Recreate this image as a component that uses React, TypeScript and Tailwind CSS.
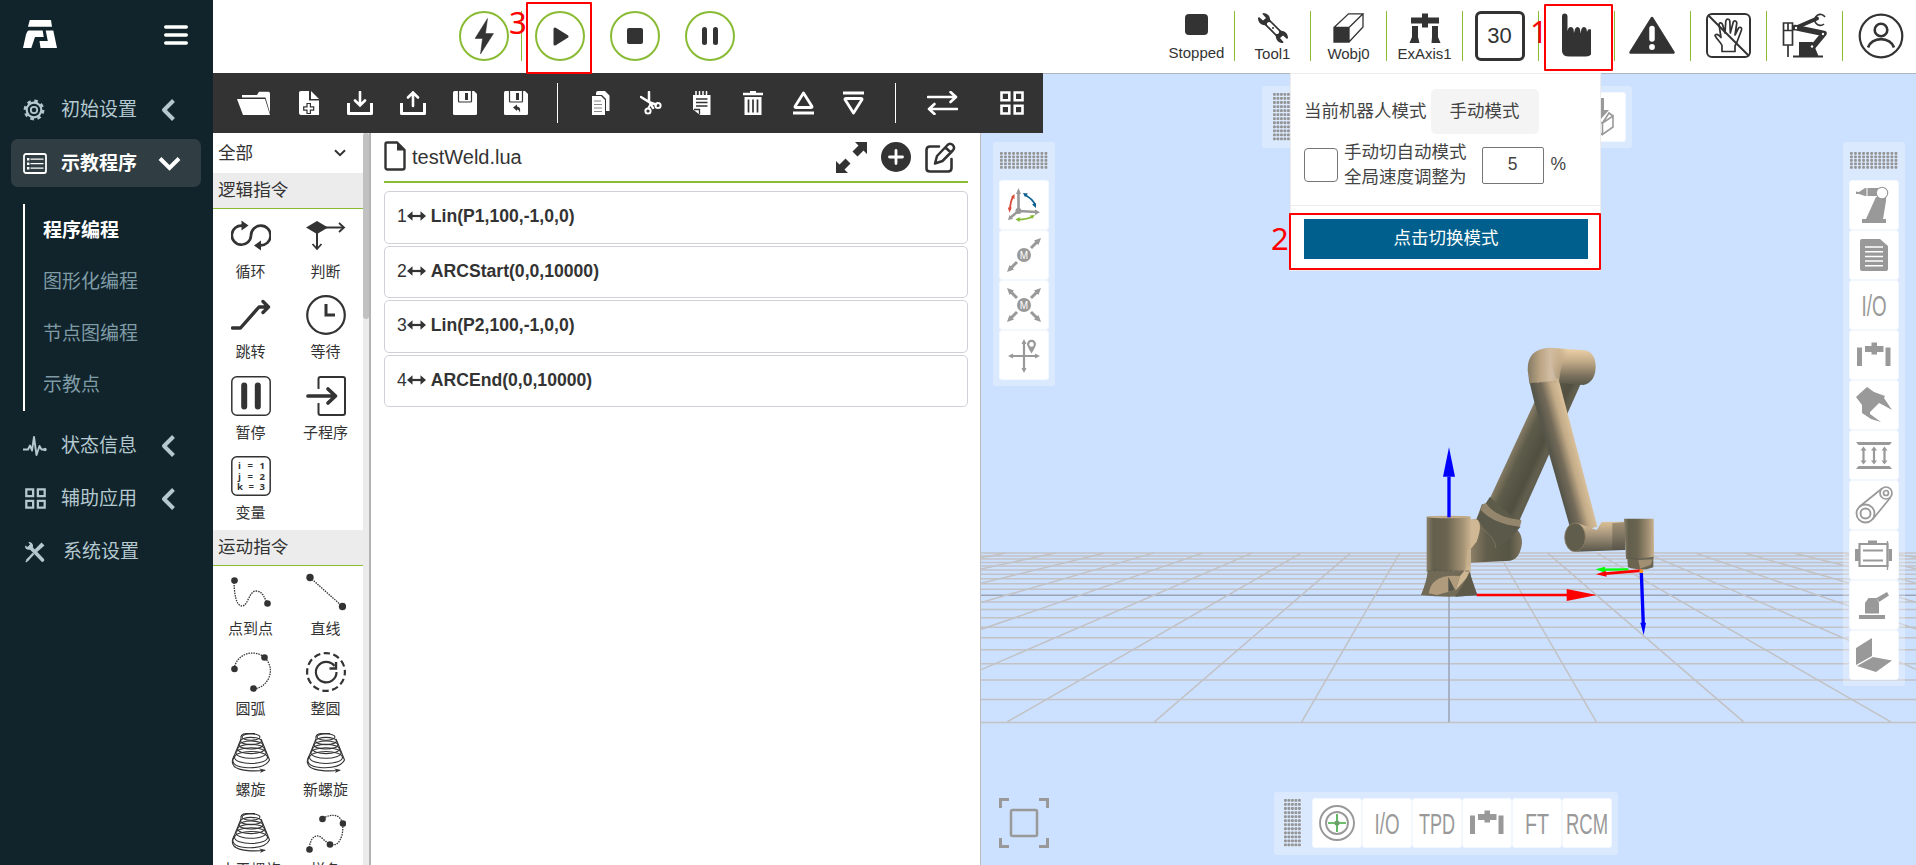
import React from "react";

const GRAY = "#999999";
const DARK = "#333333";

type SvgProps = { w: number; h: number; vb?: string; className?: string; children: React.ReactNode };
const Svg = ({ w, h, vb, className = "", children }: SvgProps) => (
  <svg width={w} height={h} viewBox={vb ?? `0 0 ${w} ${h}`} fill="none" className={"block shrink-0 " + className}>
    {children}
  </svg>
);

/* ---------- sidebar ---------- */

const ChevronLeft = () => (
  <Svg w={14} h={22}>
    <path d="M12.500 1.500 3 11l9.500 9.500" stroke="#b4c8cf" strokeWidth="4" strokeLinejoin="round" />
  </Svg>
);

const GearIcon = () => (
  <Svg w={22} h={22} className="-ml-[2px]">
    <circle cx="11" cy="11" r="9.2" stroke="#b4c8cf" strokeWidth="2.4" strokeDasharray="3.6 3.625" />
    <circle cx="11" cy="11" r="7.3" stroke="#b4c8cf" strokeWidth="2.2" />
    <circle cx="11" cy="11" r="3.2" stroke="#b4c8cf" strokeWidth="1.8" />
  </Svg>
);

const ListIcon = () => (
  <Svg w={24} h={21}>
    <rect x="1" y="1" width="22" height="19" rx="2" stroke="#fff" strokeWidth="1.8" />
    <path d="M7.5 6.2h13M7.5 10.7h13M7.5 15.2h13" stroke="#fff" strokeWidth="1.2" />
    <path d="M4 6.2h2.4M4 10.7h2.4M4 15.2h2.4" stroke="#fff" strokeWidth="2.6" />
  </Svg>
);

const PulseIcon = () => (
  <Svg w={24} h={22}>
    <path d="M0 14.5h5l2-4 2 5L11 2l2.5 18 3-9 2 3.5h3" stroke="#b4c8cf" strokeWidth="1.9" strokeLinejoin="round" />
    <circle cx="22" cy="14.5" r="1.7" fill="#b4c8cf" />
  </Svg>
);

const FourSquares = ({ color, size }: { color: string; size: number }) => (
  <Svg w={size} h={size} vb="0 0 24 24">
    <path d="M1.5 1.5h7.8v7.8H1.5zM14.7 1.5h7.8v7.8h-7.8zM1.5 14.7h7.8v7.8H1.5zM14.7 14.7h7.8v7.8h-7.8z" stroke={color} strokeWidth="2.6" />
  </Svg>
);

const ToolsIcon = () => (
  <Svg w={22} h={22}>
    <path d="M6 6 18.500 19" stroke="#b4c8cf" strokeWidth="3.6" strokeLinecap="round" />
    <path d="M1 4.500C.8 8 3.500 9.500 6.500 8.600L9 6C9.400 3 7.500.8 4.300 1L6 3.600 3.800 6z" fill="#b4c8cf" />
    <path d="M17.500 1.500 20.500 4.500 12 12 9.500 9.800z" fill="#b4c8cf" />
    <path d="M9.500 12.500 3 19.500" stroke="#b4c8cf" strokeWidth="2.4" />
    <path d="M2 21l2.500-3.500" stroke="#b4c8cf" strokeWidth="1.500" />
  </Svg>
);

const NavItem = ({ icon, label, chevron = true }: { icon: React.ReactNode; label: string; chevron?: boolean }) => (
  <div className="flex h-[53px] items-center pl-[23px]">
    <div className="flex w-[24px] justify-center">{icon}</div>
    <span className={"w-[100px] text-[19px] leading-none text-[#b4c8cf] " + (chevron ? "ml-[14px]" : "ml-[16px]")}>{label}</span>
    {chevron && <ChevronLeft />}
  </div>
);

const Sidebar = () => (
  <aside className="flex w-[213px] shrink-0 flex-col bg-[#11242b]">
    <div className="flex h-[83px] shrink-0 items-start justify-between pt-[20px] pl-[23px] pr-[25px]">
      <Svg w={34} h={28}>
        <path d="M6.800 0H28L29 6.800H5z" fill="#fff" />
        <path d="M5.500 10.500H19.700L20.700 17H12L8.300 28H0L3 14.500Q4 11 5.500 10.500z" fill="#fff" />
        <path d="M22.700 10.500H30.300L34 28H17.500L16.500 21H24.800z" fill="#fff" />
      </Svg>
      <Svg w={24} h={20} className="mt-[5px]">
        <path d="M1.700 2h20.600M1.700 10h20.600M1.700 18h20.600" stroke="#fff" strokeWidth="3.400" strokeLinecap="round" />
      </Svg>
    </div>
    <NavItem icon={<GearIcon />} label="初始设置" />
    <div className="ml-[11px] mt-[3px] flex h-[48px] w-[190px] shrink-0 items-center rounded-[7px] bg-[#303e43] pl-[12px]">
      <ListIcon />
      <span className="ml-[14px] w-[97px] text-[19px] leading-none font-bold text-white">示教程序</span>
      <Svg w={23} h={15}>
        <path d="M2 2.500 11.500 12 21 2.500" stroke="#fff" strokeWidth="4" />
      </Svg>
    </div>
    <div className="ml-[23px] mt-[17px] mb-[8px] flex h-[207px] shrink-0 flex-col border-l-2 border-white pl-[18px] text-[19px] leading-none text-[#7f9ba6]">
      <div className="flex h-[51.500px] items-center pt-[1px] font-bold text-white">程序编程</div>
      <div className="flex h-[51.500px] items-center pt-[1px]">图形化编程</div>
      <div className="flex h-[51.500px] items-center pt-[1px]">节点图编程</div>
      <div className="flex h-[51.500px] items-center pt-[1px]">示教点</div>
    </div>
    <NavItem icon={<PulseIcon />} label="状态信息" />
    <NavItem icon={<FourSquares color="#b4c8cf" size={21} />} label="辅助应用" />
    <NavItem icon={<ToolsIcon />} label="系统设置" chevron={false} />
  </aside>
);

/* ---------- header ---------- */

const RoundButton = ({ children, className = "" }: { children: React.ReactNode; className?: string }) => (
  <button className={"flex size-[50px] items-center justify-center rounded-full border-2 border-[#8abb35] " + className}>
    {children}
  </button>
);

const StatusCell = ({ children, label, last = false }: { children: React.ReactNode; label?: string; last?: boolean }) => (
  <div className={"flex h-[50px] w-[76px] shrink-0 flex-col items-center " + (last ? "" : "border-r border-[#8abb35] ") + (label ? "pt-[2px]" : "justify-center")}>
    {children}
    {label && <span className="mt-[2px] text-[15px] leading-[17px] text-[#333]">{label}</span>}
  </div>
);

const GantryIcon = () => (
  <Svg w={32} h={30}>
    <path d="M2 4.500h11V.5h6v4h11v6H19v4h-6v-4H2z" fill={DARK} />
    <path d="M3 13h6v11l1.500 6H.5L3 24zM23 13h6v11l2.500 6h-9L23 24z" fill={DARK} />
  </Svg>
);

const Header = () => (
  <header className="flex h-[73px] shrink-0 items-start bg-white pt-[11px]">
    <div className="flex pl-[246px]">
      <RoundButton>
        <Svg w={20} h={36}>
          <path d="M13.500.5 1 20.500h7.500L6.500 36 19.500 15.500h-8z" fill={DARK} stroke={DARK} strokeWidth=".5" strokeLinejoin="round" />
        </Svg>
      </RoundButton>
      <div className="ml-[12px] h-[50px] w-px bg-[#8abb35]" />
      <RoundButton className="ml-[13px]">
        <Svg w={16} h={19} className="ml-[2px]">
          <path d="M2 2v15l12-7.500z" fill={DARK} stroke={DARK} strokeWidth="3" strokeLinejoin="round" />
        </Svg>
      </RoundButton>
      <RoundButton className="ml-[25px]">
        <div className="size-[16px] rounded-[2px] bg-[#333]" />
      </RoundButton>
      <RoundButton className="ml-[25px] gap-[6px]">
        <div className="h-[18px] w-[5px] rounded-full bg-[#333]" />
        <div className="h-[18px] w-[5px] rounded-full bg-[#333]" />
      </RoundButton>
    </div>
    <div className="-mr-[3px] ml-auto flex">
      <StatusCell label="Stopped">
        <div className="mt-[1px] mb-[7px] size-[23px] rounded-[4px] bg-[#333]" />
      </StatusCell>
      <StatusCell label="Tool1">
        <Svg w={30} h={30}>
          <path d="M7 7 23 23" stroke={DARK} strokeWidth="7.500" />
          <path d="M5 0C10 0 13 4 12 9L9 12C4 13 0 10 0 5L1 4 5 7.500 8 5 4.500 1zM25 30C20 30 17 26 18 21L21 18C26 17 30 20 30 25L29 26 25 22.500 22 25 25.500 29z" fill={DARK} />
          <path d="M11 11l8 8" stroke="#fff" strokeWidth="4" strokeLinecap="round" />
          <circle cx="15" cy="15" r="1" fill={DARK} />
        </Svg>
      </StatusCell>
      <StatusCell label="Wobj0">
        <Svg w={31} h={30}>
          <path d="M1 14.500h15V29H1z" fill={DARK} />
          <path d="M1 14.500h15V29H1zM1 14.500 15.500.8H30L16 14.500M30 .8V14L16 29" stroke={DARK} strokeWidth="1.300" />
        </Svg>
      </StatusCell>
      <StatusCell label="ExAxis1">
        <GantryIcon />
      </StatusCell>
      <StatusCell>
        <div className="mr-[2px] flex size-[50px] items-center justify-center rounded-[6px] border-[3px] border-[#333] pb-[2px] text-[22px] text-[#333]">30</div>
      </StatusCell>
      <StatusCell>
        <Svg w={30} h={44} className="mr-[2px] -mt-[2px]">
          <path d="M1 3.500Q1 .5 3.700.5T6.500 3.500V18l1-3q1-1 2.500-1t2.500 2l.5 4 1-4q1-2 2.500-2t2.500 2l.5 4 1-4q.8-2 2.500-2t2.500 2l.5 3 1-2.500q4-1 4 2V38q0 5.500-6 5.500H8.500Q1 43.500 1 38z" fill={DARK} />
        </Svg>
      </StatusCell>
      <StatusCell>
        <Svg w={46} h={38} className="mr-[1px] -mt-[2px]">
          <path d="M23 2 44.500 36.500H1.500z" fill={DARK} stroke={DARK} strokeWidth="2.500" strokeLinejoin="round" />
          <path d="M23 12.500V23" stroke="#fff" strokeWidth="5.500" strokeLinecap="round" />
          <circle cx="23" cy="31" r="2.900" fill="#fff" />
        </Svg>
      </StatusCell>
      <StatusCell>
        <Svg w={45} h={45} className="-mt-[1px]">
          <rect x="1" y="1" width="43" height="43" rx="5" stroke={DARK} strokeWidth="2" />
          <path d="M16 38.500v-6c-1-3-6-7-7-10 1-2 4-1 6 2l-2-13c.5-2.500 3-2 3.700.5L19 20l.8-12c.8-2.500 3.500-2.500 4 0l.5 12 3-11c1-2 3.500-1 3.500 1L29 22l3.500-7c1.500-1.500 3.700-.5 3 2L31 29l-2 4v5.500z" stroke={DARK} strokeWidth="1.700" strokeLinejoin="round" />
          <path d="M2 2 43 43" stroke={DARK} strokeWidth="2" />
        </Svg>
      </StatusCell>
      <StatusCell>
        <Svg w={46} h={46} className="-mt-[1px]">
          <path d="M1.500 10h9v22h-9zM1.500 17.500h9M6 10v7M6 32v12" stroke={DARK} strokeWidth="1.700" />
          <path d="M12 15.500 35 5.500" stroke={DARK} strokeWidth="4" strokeLinecap="round" />
          <path d="M13 14.500 42 20.500 30 35" stroke={DARK} strokeWidth="5.500" strokeLinejoin="round" strokeLinecap="round" />
          <path d="M18 30h12l5 12H18zM11 43.500h30" fill={DARK} stroke={DARK} strokeWidth="2" />
          <path d="M43 4a5.500 5.500 0 1 0-1 7" stroke={DARK} strokeWidth="1.600" />
          <circle cx="14" cy="15" r="1.200" fill="#fff" />
          <circle cx="41" cy="21" r="1.200" fill="#fff" />
          <circle cx="30" cy="33.500" r="1.200" fill="#fff" />
        </Svg>
      </StatusCell>
      <StatusCell last>
        <Svg w={46} h={46} className="-mt-[1px] mr-[1px]">
          <circle cx="23" cy="23" r="21.300" stroke={DARK} strokeWidth="2.200" />
          <circle cx="23" cy="17" r="6.300" stroke={DARK} strokeWidth="2.600" />
          <path d="M10 34.500a13.500 11.500 0 0 1 26 0" stroke={DARK} strokeWidth="2.600" />
        </Svg>
      </StatusCell>
    </div>
  </header>
);

/* ---------- program toolbar ---------- */

const Divider = ({ className }: { className: string }) => <div className={"h-[40px] w-px shrink-0 bg-white " + className} />;

const Toolbar = () => (
  <div className="relative z-10 flex h-[60px] w-[830px] shrink-0 items-center bg-[#333] pl-[24px] pb-[1px]">
    <Svg w={34} h={24}>
      <path d="M5 6.500V4h15l2-3.200h9.500Q33 .8 33 3v19L28.500 6.500z" fill="#fff" />
      <path d="M0 8h28l5 16H6z" fill="#fff" />
    </Svg>
    <Svg w={20} h={24} className="ml-[28px]">
      <path d="M0 1.500Q0 0 2 0H10V9.500H20V24H2Q0 24 0 22z" fill="#fff" />
      <path d="M12 0 20 8H12z" fill="#fff" />
      <path d="M8 12.500h3.400v3.300h3.300v3.400h-3.300v3.300H8v-3.300H4.700v-3.400H8z" stroke="#333" strokeWidth="1.200" />
    </Svg>
    <Svg w={26} h={24} className="ml-[28px]">
      <path d="M1.500 12v10.500h23V12" stroke="#fff" strokeWidth="3" strokeLinejoin="round" />
      <path d="M13 1v12M8 9.500l5 5 5-5" stroke="#fff" strokeWidth="2.600" strokeLinecap="round" />
    </Svg>
    <Svg w={26} h={24} className="ml-[27px]">
      <path d="M1.500 12v10.500h23V12" stroke="#fff" strokeWidth="3" strokeLinejoin="round" />
      <path d="M13 15V2M8 6.500l5-5 5 5" stroke="#fff" strokeWidth="2.600" strokeLinecap="round" />
    </Svg>
    {[0, 1].map((k) => (
      <Svg key={k} w={24} h={24} className="ml-[27px]">
        <path d="M0 1.500Q0 0 1.500 0H21l3 3v19.500q0 1.500-1.500 1.500H1.500Q0 24 0 22.500z" fill="#fff" />
        <path d="M5.500 0v10Q5.500 11 6.500 11H17.500Q18.500 11 18.500 10V0" stroke="#333" strokeWidth="1.200" />
        <path d="M13.500 2v7" stroke="#333" strokeWidth="3" />
        {k === 1 && <path d="M9 16.500l4-3v2q4 0 3 6-1-3-3-3v1.500z" fill="#333" />}
      </Svg>
    ))}
    <Divider className="ml-[29px]" />
    <Svg w={18} h={24} className="ml-[34px]">
      <path d="M4 2Q4 0 6 0h7l4.500 4.500V20H14V8L10 4H4z" fill="#fff" />
      <path d="M0 5h9l4 4v15H0z" fill="#fff" />
      <path d="M2 10h7M2 13.500h8M2 17h8M2 20.500h8" stroke="#888" strokeWidth="1.200" />
    </Svg>
    <Svg w={22} h={24} className="ml-[30px]">
      <path d="M9 1v9l4 7M1 6l9 5.500 6 2" stroke="#fff" strokeWidth="2.500" strokeLinecap="round" />
      <path d="m11 12-3 6" stroke="#fff" strokeWidth="2" />
      <circle cx="8" cy="20" r="2.600" stroke="#fff" strokeWidth="2" />
      <circle cx="18" cy="14.500" r="2.600" stroke="#fff" strokeWidth="2" />
    </Svg>
    <Svg w={18} h={24} className="ml-[31px]">
      <path d="M0 4h17.500v20H7L0 18.500z" fill="#fff" />
      <path d="M3 0v4M6.500 0v4M10 0v4M13.500 0v4" stroke="#fff" strokeWidth="1.500" />
      <path d="M3 8h11.500M3 11.500h11.500M3 15h11.500" stroke="#333" strokeWidth="1.500" />
      <path d="M1 18.500h5.500v5" stroke="#333" strokeWidth="1.300" />
    </Svg>
    <Svg w={20} h={24} className="ml-[32px]">
      <path d="M0 3h20M7 1.300h6" stroke="#fff" strokeWidth="2.600" />
      <path d="M1.500 6h17v18h-17z" fill="#fff" />
      <path d="M5.500 8.500v13M10 8.500v13M14.500 8.500v13" stroke="#333" strokeWidth="1.700" />
    </Svg>
    <Svg w={21} h={24} className="ml-[30px]">
      <path d="M10.500 2 2 15.500q-.3 1 1 1h15q1.300 0 1-1z" stroke="#fff" strokeWidth="2.800" strokeLinejoin="round" />
      <path d="M0 22h21" stroke="#fff" strokeWidth="3" />
    </Svg>
    <Svg w={21} h={24} className="ml-[29px]">
      <path d="M10.500 22 2 8.500q-.3-1 1-1h15q1.300 0 1 1z" stroke="#fff" strokeWidth="2.800" strokeLinejoin="round" />
      <path d="M0 2h21" stroke="#fff" strokeWidth="3" />
    </Svg>
    <Divider className="ml-[31px]" />
    <Svg w={31} h={24} className="ml-[31px]">
      <path d="M1 6h28M23.500 1l5.500 5-5.500 5M30 18H2M7.500 13 2 18l5.500 5" stroke="#fff" strokeWidth="2.600" strokeLinecap="round" strokeLinejoin="round" />
    </Svg>
    <div className="ml-[42px]">
      <FourSquares color="#fff" size={24} />
    </div>
  </div>
);

/* ---------- instruction list ---------- */

const dotted = { stroke: DARK, strokeWidth: 1.3, strokeDasharray: "1.5 1" };

const SpiralIcon = () => (
  <Svg w={40} h={40}>
    <g stroke={DARK} strokeWidth="1.100">
      <path d="M24 .6H15Q9 1 10 6M10 6 1.500 27" />
      <ellipse cx="20" cy="4" rx="9" ry="3.200" />
      <ellipse cx="20" cy="8" rx="10.500" ry="3.600" />
      <ellipse cx="20" cy="12" rx="12" ry="4" />
      <ellipse cx="20" cy="16" rx="13.500" ry="4.600" />
      <ellipse cx="20" cy="20" rx="15" ry="5.300" />
      <ellipse cx="20" cy="24.500" rx="16.500" ry="6" />
      <path d="M3 23Q-2 33 14 34.500 34 36 38.500 27 35 18 30 6" />
      <path d="M1.500 27Q-1 40 34 37.500" />
    </g>
    <path d="m28 35.500 7 1.500-6 3 1.500-2.500z" fill={DARK} />
  </Svg>
);

const logicItems: [string, React.ReactNode][] = [
  ["循环", <Svg key="a" w={40} h={40}>
    <path d="M15 10.600H11.500A9.600 9.600 0 1 0 20 20.500 9.800 9.800 0 1 1 29.500 30.300H26" stroke={DARK} strokeWidth="2.700" />
    <path d="M10.500 5.500 17.500 10.500l-7 5zM30 25.500v10l-7-5z" fill={DARK} />
  </Svg>],
  ["判断", <Svg key="b" w={40} h={40}>
    <path d="M0 12.500 11 6l11 6.500L11 19z" fill={DARK} />
    <path d="M18 12.500h19M11 18v15" stroke={DARK} strokeWidth="2" />
    <path d="m33 8 5 4.500-5 4.500M6.500 29l4.500 5 4.500-5" stroke={DARK} strokeWidth="1.800" />
  </Svg>],
  ["跳转", <Svg key="c" w={40} h={40}>
    <path d="M1.500 33h8L28 12h9M32 6.500l5.500 5.500-5.500 5.500" stroke={DARK} strokeWidth="3.400" strokeLinecap="round" strokeLinejoin="round" />
  </Svg>],
  ["等待", <Svg key="d" w={40} h={40}>
    <circle cx="20" cy="20" r="18.800" stroke={DARK} strokeWidth="2.200" />
    <path d="M20 9v11h9" stroke={DARK} strokeWidth="3" />
  </Svg>],
  ["暂停", <Svg key="e" w={40} h={40}>
    <rect x=".8" y=".8" width="38.400" height="38.400" rx="5" stroke={DARK} strokeWidth="1.500" />
    <path d="M13.200 9.500v21M26.800 9.500v21" stroke={DARK} strokeWidth="6" strokeLinecap="round" />
  </Svg>],
  ["子程序", <Svg key="f" w={40} h={40}>
    <path d="M12.500 13V3q0-2 2-2H37q2 0 2 2v34q0 2-2 2H14.500q-2 0-2-2V27" stroke={DARK} strokeWidth="2" />
    <path d="M2 20h27M22 13l7.500 7-7.500 7" stroke={DARK} strokeWidth="3.700" strokeLinecap="round" strokeLinejoin="round" />
  </Svg>],
  ["变量", <Svg key="g" w={40} h={40}>
    <rect x=".8" y=".8" width="38.400" height="38.400" rx="5" stroke={DARK} strokeWidth="1.500" />
    <g fill={DARK} fontFamily="Open Sans, sans-serif" fontWeight="700" fontSize="9.500">
      <text x="7" y="12.800" textLength="27">i = 1</text>
      <text x="7" y="23.500" textLength="27">j = 2</text>
      <text x="6" y="34.200" textLength="28">k = 3</text>
    </g>
  </Svg>],
];

const motionItems: [string, React.ReactNode][] = [
  ["点到点", <Svg key="a" w={40} h={40}>
    <path d="M3 8C3 21 5 34 11 34S18 19 25 19 33 26 37 32" {...dotted} />
    <circle cx="3.500" cy="8.500" r="3.300" fill={DARK} /><circle cx="36.500" cy="31.500" r="3.300" fill={DARK} />
  </Svg>],
  ["直线", <Svg key="b" w={40} h={40}>
    <path d="M4 5.500 36.500 34.500" {...dotted} />
    <circle cx="4" cy="5.500" r="3.700" fill={DARK} /><circle cx="36.500" cy="34.500" r="3.700" fill={DARK} />
  </Svg>],
  ["圆弧", <Svg key="c" w={40} h={40}>
    <path d="M3 17C6 0 25-3 34 6 45 17 38 35 23 37" {...dotted} />
    <circle cx="3.500" cy="17" r="3.300" fill={DARK} /><circle cx="33.500" cy="5.500" r="3.300" fill={DARK} /><circle cx="22.500" cy="36.500" r="3.300" fill={DARK} />
  </Svg>],
  ["整圆", <Svg key="d" w={40} h={40}>
    <circle cx="20" cy="20" r="18.900" stroke={DARK} strokeWidth="2.200" strokeDasharray="6.500 3.396" strokeDashoffset="3" />
    <path d="M28.500 14a10.300 10.300 0 1 0 2 6" stroke={DARK} strokeWidth="2.200" />
    <path d="M30 10v6.500h-6.500" stroke={DARK} strokeWidth="2.400" />
  </Svg>],
  ["螺旋", <SpiralIcon key="e" />],
  ["新螺旋", <SpiralIcon key="f" />],
  ["水平螺旋", <SpiralIcon key="g" />],
  ["样条", <Svg key="h" w={40} h={40}>
    <path d="M3 37C4 24 10 20 16 25 24 33 32 36 36 22 39 8 34-3 17 5" {...dotted} />
    <circle cx="3.500" cy="36.500" r="3.300" fill={DARK} /><circle cx="24" cy="31.500" r="3.300" fill={DARK} /><circle cx="37" cy="10.500" r="3.300" fill={DARK} /><circle cx="16.500" cy="6" r="3.300" fill={DARK} />
  </Svg>],
];

const Group = ({ title, items }: { title: string; items: [string, React.ReactNode][] }) => (
  <section>
    <h3 className="flex h-[36px] items-center border-b border-[#8abb35] bg-[#ececec] pl-[5px] text-[17.600px] leading-none">{title}</h3>
    <div className="grid grid-cols-2">
      {items.map(([label, icon]) => (
        <div key={label} className="flex h-[80.300px] flex-col items-center pt-[6px]">
          {icon}
          <span className="mt-[7px] text-[15px] leading-[20px] whitespace-nowrap">{label}</span>
        </div>
      ))}
    </div>
  </section>
);

const InstructionPanel = () => (
  <div className="flex w-[158px] shrink-0 border-r-2 border-[#b3b3b3] text-[#333]">
    <div className="w-[150px] overflow-hidden">
      <div className="flex h-[40px] items-center justify-between pl-[5px] pr-[17px] text-[17.600px]">
        <span>全部</span>
        <Svg w={12} h={8}><path d="m1 1.200 5 5 5-5" stroke={DARK} strokeWidth="2" /></Svg>
      </div>
      <Group title="逻辑指令" items={logicItems} />
      <Group title="运动指令" items={motionItems} />
    </div>
    <div className="w-[6px] bg-[#ebebeb]">
      <div className="h-[186px] w-full rounded-[3px] bg-[#c1c1c1]" />
    </div>
  </div>
);

/* ---------- editor ---------- */

const program = ["Lin(P1,100,-1,0,0)", "ARCStart(0,0,10000)", "Lin(P2,100,-1,0,0)", "ARCEnd(0,0,10000)"];

const Editor = () => (
  <div className="flex w-[610px] shrink-0 flex-col border-r border-[#bbb] bg-white px-[13px] pr-[12px] text-[#333]">
    <div className="flex h-[50px] items-center border-b-2 border-[#8abb35]">
      <Svg w={22} h={30} className="mt-[-2px]">
        <path d="M3 1.500H13L20.500 9V26.500Q20.500 28.500 18.500 28.500H3.500Q1.500 28.500 1.500 26.500V3Q1.500 1.500 3 1.500z" stroke={DARK} strokeWidth="2.400" />
        <path d="M13 1v8.500h8z" fill={DARK} />
      </Svg>
      <span className="-mt-[1px] ml-[6px] text-[20px] leading-none">testWeld.lua</span>
      <div className="ml-auto flex items-center gap-[14px] pr-[12px]">
        <Svg w={31} h={31}>
          <path d="M19 0h12v12l-3.500-3.500-6 6-5-5 6-6zM12 31H0V19l3.500 3.500 6-6 5 5-6 6z" fill={DARK} />
        </Svg>
        <Svg w={30} h={30}>
          <circle cx="15" cy="15" r="15" fill={DARK} />
          <path d="M15 8.500v13M8.500 15h13" stroke="#fff" strokeWidth="2.800" strokeLinecap="round" />
        </Svg>
        <Svg w={31} h={31}>
          <path d="M14 4.500H5q-3.500 0-3.500 3.500v18.500Q1.500 29.500 5 29.500h18q3.500 0 3.500-3.500V17" stroke={DARK} strokeWidth="2.600" strokeLinecap="round" />
          <path d="M10 21.500 12 14 22.500 3q2.500-2.500 5.300 0 2.500 2.700 0 5.500L17.500 19zM20.500 5.500l5.300 5" stroke={DARK} strokeWidth="2.500" strokeLinejoin="round" />
        </Svg>
      </div>
    </div>
    <div className="mt-[8px] flex flex-col gap-[2px]">
      {program.map((line, i) => (
        <div key={line} className="flex h-[52.500px] items-center rounded-[5px] border border-[#d0d0d8] pb-[2px] pl-[12px] text-[17.600px]">
          <span>{i + 1}</span>
          <Svg w={19} h={10}>
            <path d="M4 5h11" stroke={DARK} strokeWidth="2.200" />
            <path d="M0 5 5.500.3v9.400zM19 5 13.500.3v9.400z" fill={DARK} />
          </Svg>
          <span className="ml-[5px] font-bold">{line}</span>
        </div>
      ))}
    </div>
  </div>
);

/* ---------- 3D scene ---------- */

const steps = Array.from({ length: 21 }, (_, i) => i - 10);

const Scene = () => (
  <svg viewBox="981 74 935 791" width="935" height="791" className="block" fill="none">
    <defs>
      <linearGradient id="base"><stop offset="0" stopColor="#8a7f68" /><stop offset=".15" stopColor="#625f4c" /><stop offset=".45" stopColor="#6a6450" /><stop offset=".8" stopColor="#a08f73" /><stop offset="1" stopColor="#c9b18d" /></linearGradient>
      <linearGradient id="back" gradientUnits="userSpaceOnUse" x1="385" y1="385" x2="470" y2="425"><stop offset="0" stopColor="#857b64" /><stop offset=".3" stopColor="#5d5b4a" /><stop offset=".8" stopColor="#504f40" /><stop offset="1" stopColor="#625e4d" /></linearGradient>
      <linearGradient id="front" gradientUnits="userSpaceOnUse" x1="515" y1="378" x2="600" y2="355"><stop offset="0" stopColor="#57564a" /><stop offset=".3" stopColor="#746b59" /><stop offset=".62" stopColor="#c3ab88" /><stop offset=".85" stopColor="#d6bd98" /><stop offset="1" stopColor="#dec294" /></linearGradient>
      <linearGradient id="elbow" x1="0" y1="0" x2="0" y2="1"><stop offset="0" stopColor="#f0d4aa" /><stop offset=".35" stopColor="#c5ad8a" /><stop offset=".75" stopColor="#7c725d" /><stop offset="1" stopColor="#58574a" /></linearGradient>
      <linearGradient id="bend"><stop offset="0" stopColor="#857a64" /><stop offset=".3" stopColor="#b9a383" /><stop offset=".55" stopColor="#d2bca2" /><stop offset=".78" stopColor="#c5ad8a" stopOpacity=".7" /><stop offset="1" stopColor="#c5ad8a" stopOpacity="0" /></linearGradient>
      <linearGradient id="wrist" x1="0" y1="0" x2="0" y2="1"><stop offset="0" stopColor="#dcc198" /><stop offset=".45" stopColor="#a3937a" /><stop offset="1" stopColor="#59574a" /></linearGradient>
      <linearGradient id="shoulder"><stop offset="0" stopColor="#8d8067" /><stop offset=".3" stopColor="#625e4c" /><stop offset=".75" stopColor="#565444" /><stop offset="1" stopColor="#7e745d" /></linearGradient>
    </defs>
    <rect x="981" y="74" width="935" height="791" fill="#cce0ff" />
    {steps.map((i) => {
      const y = 468 + 2543 / (20 - i) + 0.2;
      return <line key={"h" + i} x1="957" x2="1941" y1={y} y2={y} stroke={i === 0 ? "#9ca3b3" : "#c2c2c4"} strokeWidth="1.500" />;
    })}
    {steps.map((j) => (
      <line key={"v" + j} x1={1449 + 49.2 * j} y1="552.900" x2={1449 + 147.3 * j} y2="721.900" stroke={j === 0 ? "#9ca3b3" : "#c2c2c4"} strokeWidth="1.500" />
    ))}
    <g transform="translate(1380 330) scale(.33333)">
      <path d="M545 140 602 162 418 572 318 530 462 220z" fill="url(#back)" />
      <path d="M272 570 290 566 306 522 424 574 412 600Q426 612 426 640 420 688 390 692L272 698z" fill="url(#shoulder)" />
      <path d="M290 566 303 540Q340 586 422 590L408 605Q380 640 348 655 335 620 290 566z" fill="#5b594a" />
      <path d="M303 540Q304 520 320 518 345 562 424 570L420 590Q340 582 303 540z" fill="#94866d" />
      <path d="M318 519Q345 562 422 570 380 555 330 500z" fill="#5d5b4a" />
      <path d="M300 592Q345 620 348 655" stroke="#7a715c" strokeWidth="3" />
      <path d="M262 568H290Q310 580 290 635L265 665z" fill="#cfb893" />
      <path d="M140 560H272V725H140z" fill="url(#base)" />
      <path d="M272 650V700L255 730 262 660z" fill="#c6af8c" />
      <ellipse cx="206" cy="561" rx="66" ry="4" fill="#c0aa88" />
      <path d="M143 724H270Q275 760 292 795 205 806 123 795 140 755 143 724z" fill="#716a56" />
      <path d="M146 790Q155 730 240 738L226 780 170 795z" fill="#b09c7d" />
      <path d="M240 738 272 700 268 735 226 782z" fill="#cdb692" />
      <path d="M268 725 292 795 225 800Q255 760 268 725z" fill="#5d5a49" />
      <path d="M205 740 225 780 205 785z" fill="#57564a" />
      <path d="M143 723H270" stroke="#56554a" strokeWidth="2" strokeDasharray="12 4" />
      <path d="M207 440V562" stroke="#00f" strokeWidth="10" />
      <path d="M207 352 225 440H189z" fill="#00f" />
      <path d="M500 53 615 61Q647 68 647 112 645 158 610 165L530 158z" fill="url(#elbow)" />
      <path d="M447 150 535 145 652 590Q610 605 568 585L463 217z" fill="url(#front)" />
      <path d="M448 160 443 120Q442 55 510 53L565 57Q545 90 537 155 495 152 448 160z" fill="url(#bend)" />
      <path d="M470 158Q500 153 537 157" stroke="#b09c7f" strokeWidth="2" strokeDasharray="9 4" />
      <path d="M590 578 650 600 665 576 735 575V660L590 665z" fill="url(#wrist)" />
      <path d="M697 580 737 576V660H697z" fill="#4e4c40" fillOpacity=".4" />
      <ellipse cx="585" cy="622" rx="31" ry="43" fill="#605d4c" stroke="#928369" strokeWidth="2" />
      <path d="M732 566H821L822 680Q780 690 738 685z" fill="url(#base)" />
      <path d="M742 685Q780 690 820 682V712L800 718Q765 720 744 712z" fill="#6a6450" />
      <path d="M775 690 818 688 812 705 780 716z" fill="#a08f73" />
      <path d="M738 685Q780 690 822 682" stroke="#4e4d42" strokeWidth="2" />
      <path d="M290 795H565" stroke="#f00" strokeWidth="8" />
      <path d="M560 777 650 795 560 813z" fill="#f00" />
      <path d="M745 718 670 719" stroke="#0f0" strokeWidth="7" />
      <path d="M647 718 675 710V728z" fill="#0f0" />
      <path d="M785 722 675 731" stroke="#f00" strokeWidth="8" />
      <path d="M648 733 678 723 680 740z" fill="#f00" />
      <path d="M784 728 790 885" stroke="#00f" strokeWidth="10" />
      <path d="M781 878H798L791 915z" fill="#00f" />
      <circle cx="784" cy="724" r="6" fill="#ff9a1f" />
    </g>
  </svg>
);

/* ---------- floating tool panels ---------- */

const Grip = ({ vertical = false }: { vertical?: boolean }) => {
  const cols = vertical ? 5 : 12;
  const rows = vertical ? 12 : 5;
  const px = vertical ? 3.5 : 4.05;
  const py = vertical ? 4.05 : 3.5;
  return (
    <Svg w={vertical ? 17 : 48} h={vertical ? 48 : 17}>
      {Array.from({ length: cols * rows }, (_, k) => (
        <rect key={k} x={(k % cols) * px} y={Math.floor(k / cols) * py} width="2.800" height="2.800" rx=".8" fill="#949494" />
      ))}
    </Svg>
  );
};

const Tile = ({ children }: { children: React.ReactNode }) => (
  <div className="flex size-[50px] shrink-0 items-center justify-center rounded-[3px] border border-[#f3f8ff] bg-white">{children}</div>
);

const Word = ({ text, width }: { text: string; width: number }) => (
  <Svg w={48} h={44}>
    <text x={24 - width / 2} y="32.500" textLength={width} lengthAdjust="spacingAndGlyphs" fill={GRAY} fontFamily="Liberation Sans Narrow, Liberation Sans, sans-serif" fontSize="29">
      {text}
    </text>
  </Svg>
);

const MBadge = () => (
  <>
    <circle cx="17" cy="17" r="7" fill={GRAY} />
    <text x="17" y="20.600" textAnchor="middle" fontSize="10" fontFamily="Liberation Sans, sans-serif" fill="#fff">M</text>
  </>
);

const SmallGantry = () => (
  <Svg w={34} h={24} className="-mt-[2px]">
    <path d="M8 4h6.500V.5h5.500V4h6.500v6H20v2.500h-5.500V10H8zM0 5.500h5V24H0zM28.500 5.500h5V24h-5z" fill={GRAY} />
  </Svg>
);

const LeftPanel = () => (
  <div className="absolute top-[68px] left-[12px] flex h-[244px] w-[62px] flex-col items-center rounded-[3px] bg-white/30 pt-[10px]">
    <Grip />
    <div className="mt-[11px] flex flex-col">
      <Tile>
        <Svg w={34} h={34} className="-mt-[1px]">
          <path d="M11.500 23V5M11.500 23 30 24M11.500 23 3 30" stroke={GRAY} strokeWidth="2.600" />
          <path d="M11.500 0 14 6H9zM33 24.300 28 27v-5.500zM1 32l1.500-5 3.500 4z" fill={GRAY} />
          <circle cx="11.500" cy="23" r="3" fill={GRAY} />
          <path d="M6.500 8Q3 14 3 22" stroke="#d94a38" strokeWidth="1.800" /><path d="M7.500 6v5L4 9zM2.500 24.500.8 19.500h4z" fill="#d94a38" />
          <path d="M18 7Q26 11 28 17" stroke="#0b5f8f" strokeWidth="1.800" /><path d="M16 5l5 .5-3 3.500zM29 20l-4-3.500 4-1.500z" fill="#0b5f8f" />
          <path d="M11 31.500Q20 31.500 26 28.500" stroke="#84b932" strokeWidth="1.800" /><path d="M8.500 31.500l4-2.500v5zM28 27l-5 .5 2 3.500z" fill="#84b932" />
        </Svg>
      </Tile>
      <Tile>
        <Svg w={34} h={34}>
          <path d="m24 10 6-6M10 24l-6 6" stroke={GRAY} strokeWidth="3" />
          <path d="M34 0 31.500 7 27 2.500zM0 34l2.500-7L7 31.500z" fill={GRAY} />
          <MBadge />
        </Svg>
      </Tile>
      <Tile>
        <Svg w={34} h={34}>
          <path d="m24 10 6-6M10 24l-6 6M10 10 4 4M24 24l6 6" stroke={GRAY} strokeWidth="3" />
          <path d="M34 0 31.500 7 27 2.500zM0 34l2.500-7L7 31.500zM0 0l7 2.500L2.500 7zM34 34l-7-2.500 4.500-4.500z" fill={GRAY} />
          <MBadge />
        </Svg>
      </Tile>
      <Tile>
        <Svg w={34} h={34} className="mt-[2px]">
          <path d="M17 3v28M3 17h28" stroke={GRAY} strokeWidth="2.200" />
          <path d="M17 0l2.500 5h-5zM17 34l2.500-5h-5zM1 17l5-2.500v5zM33 17l-5-2.500v5z" fill={GRAY} />
          <path fillRule="evenodd" d="M24.500.8a4.500 4.500 0 0 1 4.500 5Q28 9 24.500 14.500 21 9 20 5.800a4.500 4.500 0 0 1 4.500-5zm0 2.300a2.300 2.300 0 1 0 0 4.600 2.300 2.300 0 0 0 0-4.600z" fill={GRAY} />
        </Svg>
      </Tile>
    </div>
  </div>
);

const TopPanel = () => (
  <div className="absolute top-[12px] left-[281px] flex h-[62px] w-[370px] items-center justify-between rounded-[3px] bg-white/30 pl-[11px] pr-[6px]">
    <Grip vertical />
    <Tile>
      <Svg w={36} h={38}>
        <path d="M19.500 25 30 18V29L19.500 36.500zM19.500 25 8 21V32l11.500 4.500M19.500 25 26 15 30 18" stroke={GRAY} strokeWidth="1.600" />
        <path d="M15 0h6v12h5l-8 9-8-9h5z" fill={GRAY} />
      </Svg>
    </Tile>
  </div>
);

const RightPanel = () => (
  <div className="absolute top-[68px] right-[11px] flex h-[544px] w-[62px] flex-col items-center rounded-[3px] bg-white/30 pt-[10px]">
    <Grip />
    <div className="mt-[11px] flex flex-col">
      <Tile>
        <Svg w={36} h={38}>
          <path d="M3 6 9 2h20v8H9L3 8H0V5.500zM20 11h10v4l-3 18h3v4H6v-4h4z" fill={GRAY} />
          <path d="M11 2v8" stroke="#fff" /><circle cx="26" cy="7" r="5.700" fill="#fff" stroke={GRAY} strokeWidth="1.100" />
        </Svg>
      </Tile>
      <Tile>
        <Svg w={28} h={32}>
          <path d="M0 2Q0 0 2 0H20l8 7V30q0 2-2 2H2q-2 0-2-2z" fill={GRAY} />
          <path d="M5 8h18M5 12.700h18M5 17.400h18M5 22.100h18M5 26.800h18" stroke="#fff" strokeWidth="1.500" />
        </Svg>
      </Tile>
      <Tile><Word text="I/O" width={25} /></Tile>
      <Tile><SmallGantry /></Tile>
      <Tile>
        <Svg w={36} h={36}>
          <path d="M0 10 11 0l7 5 11 4-1 2 2 3 6 9-9-5-4-2-9 9v2l11 8-10-3-9-6Q6 22 6 18z" fill={GRAY} />
        </Svg>
      </Tile>
      <Tile>
        <Svg w={36} h={27}>
          <path d="M0 0h36l-2.500 3h-31zM0 27h36l-2.500-3h-31z" fill={GRAY} />
          <path d="M7.500 7v13M18 7v13M28.500 7v13" stroke={GRAY} strokeWidth="2.200" />
          <path d="m7.500 4.500 3 4h-6zM18 4.500l3 4h-6zM28.500 4.500l3 4h-6zM7.500 22.500l3-4h-6zM18 22.500l3-4h-6zM28.500 22.500l3-4h-6z" fill={GRAY} />
        </Svg>
      </Tile>
      <Tile>
        <Svg w={38} h={38}>
          <circle cx="10.500" cy="27.500" r="9" stroke={GRAY} strokeWidth="1.800" /><circle cx="10.500" cy="27.500" r="5" stroke={GRAY} strokeWidth="1.900" />
          <circle cx="31" cy="7" r="6" stroke={GRAY} strokeWidth="1.700" /><circle cx="31" cy="7" r="2.500" stroke={GRAY} strokeWidth="1.700" />
          <path d="M4 21 27 2.500M17.500 33.500 35.500 11.500" stroke={GRAY} strokeWidth="1.700" />
        </Svg>
      </Tile>
      <Tile>
        <Svg w={38} h={30}>
          <path d="M4.500 4h28v22h-28z" stroke={GRAY} strokeWidth="2.200" />
          <path d="M0 9h4v12H0zM33.500 9H37v12h-3.500zM13 .5h9V4h-9z" fill={GRAY} />
          <path d="M32.500 1v29" stroke={GRAY} strokeWidth="1.300" /><path d="M8 10.500h20M8 20.500h20" stroke={GRAY} strokeWidth="2" />
        </Svg>
      </Tile>
      <Tile>
        <Svg w={31} h={27}>
          <path d="M0 23h26v4H0zM6 21.500V11l3.500-5h8l2.500 5v10.500zM17.500 6 28 0l2 3.500L20 10z" fill={GRAY} />
        </Svg>
      </Tile>
      <Tile>
        <Svg w={36} h={34}>
          <path d="M0 10 16 0V18L0 27zM1 28l16-9 19 3.500L20 34z" fill={GRAY} />
        </Svg>
      </Tile>
    </div>
  </div>
);

const BottomPanel = () => (
  <div className="absolute bottom-[10px] left-[293px] flex h-[63px] w-[344px] items-start rounded-[3px] bg-white/30 pt-[6px] pl-[10px]">
    <div className="pt-[1px]">
      <Grip vertical />
    </div>
    <div className="ml-[11px] flex">
      <Tile>
        <Svg w={36} h={36}>
          <circle cx="18" cy="18" r="17" stroke={GRAY} strokeWidth="1.900" /><circle cx="18" cy="18" r="11" stroke={GRAY} strokeWidth="1.900" />
          <path d="M18 9v18M9 18h18" stroke="#3faa3c" strokeWidth="1.600" /><circle cx="18" cy="18" r="2.600" fill="#6c9f6a" />
        </Svg>
      </Tile>
      <Tile><Word text="I/O" width={25} /></Tile>
      <Tile><Word text="TPD" width={36} /></Tile>
      <Tile><SmallGantry /></Tile>
      <Tile><Word text="FT" width={24} /></Tile>
      <Tile><Word text="RCM" width={42} /></Tile>
    </div>
  </div>
);

const Viewport = () => (
  <div className="relative min-w-0 flex-1 overflow-hidden">
    <Scene />
    <LeftPanel />
    <TopPanel />
    <RightPanel />
    <BottomPanel />
    <div className="absolute bottom-[17px] left-[18px]">
      <Svg w={50} h={50}>
        <path d="M1.500 10V1.500H10M40 1.500h8.500V10M48.500 40v8.500H40M10 48.500H1.500V40" stroke={GRAY} strokeWidth="3" />
        <rect x="12" y="12" width="26" height="26" rx="1.500" stroke={GRAY} strokeWidth="2.500" />
      </Svg>
    </div>
  </div>
);

/* ---------- robot mode popover ---------- */

const ModePopover = () => (
  <div className="absolute top-[73px] left-[1290px] z-20 flex h-[198px] w-[311px] flex-col border border-[#ececec] bg-white text-[17.500px] leading-none text-[#444]">
    <div className="mt-[15px] flex items-center pl-[13px]">
      <span>当前机器人模式</span>
      <span className="ml-[4px] flex h-[45px] w-[108px] items-center justify-center rounded-[5px] bg-[#f4f4f4]">手动模式</span>
    </div>
    <div className="mt-[6px] flex h-[50px] items-center pl-[13px]">
      <span className="size-[34px] rounded-[4px] border-[1.500px] border-[#767676]" />
      <span className="ml-[6px] leading-[25px]">手动切自动模式<br />全局速度调整为</span>
      <span className="ml-[15px] flex h-[37px] w-[62px] items-center justify-center rounded-[2px] border border-[#767676]">5</span>
      <span className="ml-[7px]">%</span>
    </div>
    <div className="mt-[15px] border-t border-[#ececec] px-[13px] pt-[13px]">
      <button className="flex h-[40px] w-[284px] items-center justify-center bg-[#005f8c] pb-px text-white">点击切换模式</button>
    </div>
  </div>
);

const Callout = ({ n, numClass, boxClass }: { n: number; numClass: string; boxClass: string }) => (
  <>
    <span className={"absolute z-30 font-['Noto_Sans'] text-[31px] leading-[30px] text-[#f00] " + numClass}>{n}</span>
    <div className={"absolute z-30 rounded-[1px] border-2 border-[#f00] " + boxClass} />
  </>
);

export default function App() {
  return (
    <div className="relative flex h-[865px] w-[1916px] overflow-hidden bg-white font-['Liberation_Sans','Noto_Sans_CJK_SC',sans-serif]">
      <Sidebar />
      <div className="flex min-w-0 flex-1 flex-col">
        <Header />
        <div className="flex min-h-0 flex-1">
          <div className="flex w-[768px] shrink-0 flex-col">
            <Toolbar />
            <div className="flex min-h-0 flex-1">
              <InstructionPanel />
              <Editor />
            </div>
          </div>
          <div className="flex min-w-0 flex-1 border-t border-[#b0b5bd]">
            <Viewport />
          </div>
        </div>
      </div>
      <ModePopover />
      <Callout n={3} numClass="left-[509px] top-[7px]" boxClass="left-[526px] top-[2px] h-[72px] w-[66px]" />
      <Callout n={1} numClass="left-[1530px] top-[16px]" boxClass="left-[1544px] top-[4px] h-[67px] w-[69px]" />
      <Callout n={2} numClass="left-[1271px] top-[223px]" boxClass="left-[1289px] top-[213px] h-[57px] w-[312px]" />
    </div>
  );
}
